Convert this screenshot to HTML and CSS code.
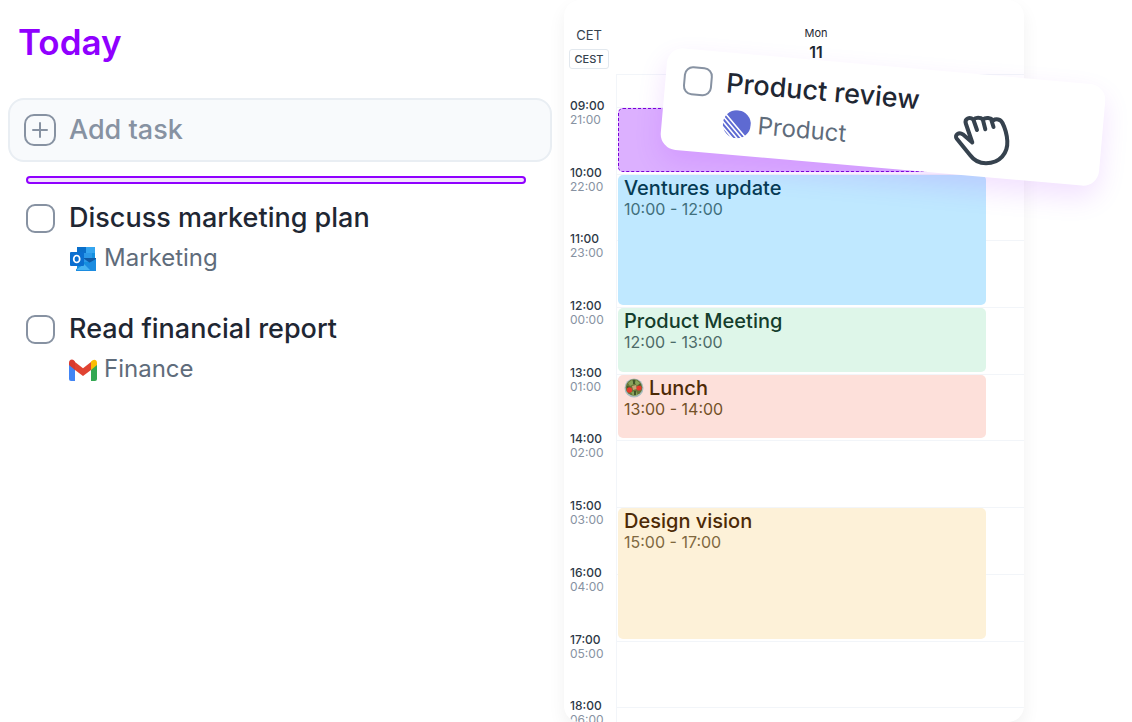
FILE: index.html
```html
<!DOCTYPE html>
<html lang="en">
<head>
    <meta charset="UTF-8">
    <meta name="viewport" content="width=device-width, initial-scale=1.0">
    <title>Today</title>
    <link rel="stylesheet" href="styles.css">
</head>
<body>
    <main class="planner">
        <section class="tasks">
            <h1>Today</h1>

            <label class="add-task">
                <svg class="add-icon" viewBox="0 0 32 32" fill="none" stroke="#8792a2" stroke-width="2" stroke-linecap="round">
                    <rect x="1" y="1" width="30" height="30" rx="9"/>
                    <path d="M16 9v14M9 16h14"/>
                </svg>
                <input type="text" placeholder="Add task" aria-label="Add task">
            </label>

            <div class="drop-line"></div>

            <ul class="task-list">
                <li class="task">
                    <input type="checkbox" id="task-marketing">
                    <label for="task-marketing">Discuss marketing plan</label>
                    <div class="source">
                        <svg class="source-icon" viewBox="0 0 28 28">
                            <path fill="#1490df" d="M8 3h18v23H8z"/>
                            <path fill="#0a6fca" d="M8 3h9v7H8z"/>
                            <path fill="#35a5ef" d="M17 3h9v6h-9z"/>
                            <path fill="#1683d8" d="M8 10h6v10H8z"/>
                            <path fill="#2a98e8" d="M14 9h9v9h-9z"/>
                            <path fill="#0f5aa6" d="M27 14v2l-6 3-7-5z"/>
                            <path fill="#1c8ce0" d="M27 15v12H7v-2l13-6z"/>
                            <path fill="#47b4f2" d="M7 26l8-6 6 6z"/>
                            <rect fill="#0a6fd0" x="1" y="8" width="14" height="14" rx="1"/>
                            <ellipse cx="7.700" cy="15" rx="3" ry="3.500" fill="none" stroke="#fff" stroke-width="1.700"/>
                        </svg>
                        <span>Marketing</span>
                    </div>
                </li>
                <li class="task">
                    <input type="checkbox" id="task-finance">
                    <label for="task-finance">Read financial report</label>
                    <div class="source">
                        <svg class="source-icon" viewBox="0 0 28 28">
                            <path fill="#4285f4" d="M0 9l6 4v13H2q-2 0-2-2z"/>
                            <path fill="#34a853" d="M22 13l6-4v15q0 2-2 2h-4z"/>
                            <path fill="#fbbc04" d="M22 6.500q3-3 5.200-1Q28 6 28 8v2l-6 5z"/>
                            <path fill="#e04332" d="M6 7l8 6.200L22 7v8l-8 6-8-6z"/>
                            <path fill="#d93a2f" d="M0 10V8q0-3.500 3-3.500 1.500 0 3 2V15z"/>
                        </svg>
                        <span>Finance</span>
                    </div>
                </li>
            </ul>
        </section>

        <section class="calendar">
            <header class="calendar-head">
                <div class="zones">
                    <span class="zone">CET</span>
                    <button type="button" class="zone-alt">CEST</button>
                </div>
                <div class="day">
                    <span class="day-name">Mon</span>
                    <span class="day-number">11</span>
                </div>
            </header>

            <div class="hours">
                <div class="slot first"></div>
                <div class="time h9">09:00<small>21:00</small></div><div class="slot h9"></div>
                <div class="time h10">10:00<small>22:00</small></div><div class="slot h10"></div>
                <div class="time h11">11:00<small>23:00</small></div><div class="slot h11"></div>
                <div class="time h12">12:00<small>00:00</small></div><div class="slot h12"></div>
                <div class="time h13">13:00<small>01:00</small></div><div class="slot h13"></div>
                <div class="time h14">14:00<small>02:00</small></div><div class="slot h14"></div>
                <div class="time h15">15:00<small>03:00</small></div><div class="slot h15"></div>
                <div class="time h16">16:00<small>04:00</small></div><div class="slot h16"></div>
                <div class="time h17">17:00<small>05:00</small></div><div class="slot h17"></div>
                <div class="time h18">18:00<small>06:00</small></div><div class="slot h18"></div>

                <div class="event placeholder h9"></div>
                <article class="event ventures h10">
                    <h2>Ventures update</h2>
                    <p>10:00 - 12:00</p>
                </article>
                <article class="event meeting h12">
                    <h2>Product Meeting</h2>
                    <p>12:00 - 13:00</p>
                </article>
                <article class="event lunch h13">
                    <h2>
                        <svg class="salad" viewBox="0 0 20 20">
                            <circle cx="10" cy="10" r="9.500" fill="#a9bcc0"/>
                            <circle cx="10" cy="9.500" r="8.300" fill="#667536"/>
                            <path fill="#87a35a" d="M4 5l4-3 2 4-4 2zM12 2l4 3-3 3-2-3zM7 14l5-1 2 4-5 1z"/>
                            <path fill="#c5a276" d="M8 8l4-1 1 4-4 1z"/>
                            <path fill="#41552a" d="M9 2h2v4H9zM3 8l4 1-1 1-3 0zM10 13h2v4h-2zM13 8l3-2 1 1-3 2z"/>
                            <circle cx="5.500" cy="12" r="2.700" fill="#e63b2c"/>
                            <circle cx="15" cy="10" r="2.600" fill="#e63b2c"/>
                        </svg>
                        Lunch
                    </h2>
                    <p>13:00 - 14:00</p>
                </article>
                <article class="event design h15">
                    <h2>Design vision</h2>
                    <p>15:00 - 17:00</p>
                </article>
            </div>
        </section>

        <!-- card being dragged onto the 9:00 slot -->
        <div class="task dragged">
            <input type="checkbox" id="task-review">
            <label for="task-review">Product review</label>
            <div class="source">
                <svg class="source-icon" viewBox="0 0 28 28">
                    <circle cx="14" cy="14" r="14" fill="#5e6ad2"/>
                    <path stroke="#fff" stroke-width="1.600" d="M1 3.500L25 27.500M-1 6.500L21 28.500M-1 11.500L17 29.500M-1 16.500L12 29.500"/>
                </svg>
                <span>Product</span>
            </div>
        </div>
        <svg class="hand" viewBox="0 0 60 56" fill="#fff" stroke="#36424e" stroke-width="4" stroke-linecap="round" stroke-linejoin="round">
            <path d="M20.300 30.500L10.800 22.300C7 19.500 2 23 4.800 26.800L18 43C22 48.500 28 51.300 34 51.300C48 51.300 56 41 55.300 29C55 24 52.500 15 50.500 11C48.500 7 44 6.500 41 8.500C39 5.500 33.500 5 31 7.500C28.500 5 23.500 5 21.500 7.500C17.500 4.500 12.500 6.500 13.800 11.500Z"/>
            <path d="M21.500 8L25 18M30.800 7.500L33.300 17.300M39.500 8.500L41.500 15"/>
        </svg>
    </main>
</body>
</html>
```
FILE: styles.css
```css
* {
    box-sizing: border-box;
}
body {
    margin: 0;
    font-family: Inter, "Liberation Sans", sans-serif;
    color: #1f2733;
    background-color: #fff;
}
h1, h2, p, ul {
    margin: 0;
    padding: 0;
}
.planner {
    position: relative;
    display: grid;
    grid-template-columns: 560fr 460fr;
    gap: 4px;
    height: 100vh;
    padding-right: 108px;
    overflow: hidden;
}

/* Task list */
.tasks {
    padding: 20px 8px;
    border-radius: 16px;
}
h1 {
    padding-left: 10px;
    font-size: 35px;
    line-height: 44px;
    font-weight: 600;
    color: #9000ff;
}
.add-task {
    display: flex;
    align-items: center;
    gap: 13px;
    height: 64px;
    margin-top: 34px;
    padding: 0 14px;
    border: 2px solid #e9eef3;
    border-radius: 16px;
    background-color: #f8fafc;
}
.add-icon {
    flex: none;
    width: 32px;
    height: 32px;
}
.add-task input {
    flex: 1;
    min-width: 0;
    padding: 0;
    border: 0;
    outline: 0;
    background: none;
    font: 500 27px/36px Inter, "Liberation Sans", sans-serif;
}
.add-task input::placeholder {
    color: #8792a2;
    opacity: 1;
}
.drop-line {
    height: 8px;
    margin: 14px 26px 14px 18px;
    border: 2px solid #9000ff;
    border-radius: 4px;
    background-color: #f3e2ff;
}
.task-list {
    display: grid;
    gap: 35px;
    padding: 0 18px;
    list-style: none;
}
.task {
    display: grid;
    grid-template-columns: 29px 1fr;
    column-gap: 14px;
    row-gap: 4px;
    align-items: center;
}
.task input {
    appearance: none;
    width: 29px;
    height: 29px;
    margin: 0;
    border: 2px solid #8792a2;
    border-radius: 9px;
}
.task input:checked {
    background-color: #9000ff;
}
.task label {
    font-size: 27px;
    line-height: 40px;
    font-weight: 500;
    white-space: nowrap;
}
.source {
    grid-column: 2;
    display: flex;
    align-items: center;
    gap: 7px;
    font-size: 24px;
    line-height: 32px;
    color: #5f6c7b;
}
.source-icon {
    width: 28px;
    height: 28px;
}

/* Calendar */
.calendar {
    overflow: hidden;
    display: flex;
    flex-direction: column;
    border-radius: 16px;
    background-color: #fff;
    box-shadow: 0 8px 18px rgba(0, 0, 0, 0.06);
}
.calendar-head {
    flex: none;
    display: grid;
    grid-template-columns: 52px 1fr;
    height: 74px;
    padding-top: 25px;
}
.zones, .day {
    display: flex;
    flex-direction: column;
    align-items: center;
}
.zones {
    padding-right: 2px;
}
.zone {
    font-size: 13px;
    line-height: 20px;
    color: #36424e;
}
.zone-alt {
    width: 40px;
    height: 20px;
    margin-top: 4px;
    padding: 0;
    border: 1px solid #e2e8ee;
    border-radius: 3px;
    background: none;
    font: 500 11px/16px Inter, "Liberation Sans", sans-serif;
    color: #36424e;
}
.day {
    padding-right: 8px;
}
.day-name {
    font-size: 11px;
    line-height: 16px;
}
.day-number {
    font-size: 16px;
    line-height: 22px;
    font-weight: 600;
}
.hours {
    flex: none;
    display: grid;
    grid-template-columns: 52px 1fr;
    grid-template-rows: 33px repeat(10, 1fr);
    height: 700px;
}
.h9 { grid-row: 2; }
.h10 { grid-row: 3; }
.h11 { grid-row: 4; }
.h12 { grid-row: 5; }
.h13 { grid-row: 6; }
.h14 { grid-row: 7; }
.h15 { grid-row: 8; }
.h16 { grid-row: 9; }
.h17 { grid-row: 10; }
.h18 { grid-row: 11; }
.time {
    grid-column: 1;
    margin-top: -8px;
    padding-left: 6px;
    font-size: 12px;
    line-height: 14px;
    font-weight: 500;
    color: #2c3846;
}
.time small {
    display: block;
    font-size: 12px;
    line-height: 13px;
    font-weight: 400;
    color: #8792a2;
}
.slot {
    grid-column: 2;
    border-top: 1px solid #f2f5f9;
    border-left: 1px solid #f2f5f9;
}
.first {
    grid-row: 1;
}
.event {
    grid-column: 2;
    margin: 1px 38px 2px 2px;
    padding: 2px 6px;
    border-radius: 5px;
}
.event h2 {
    display: flex;
    align-items: center;
    gap: 5px;
    font-size: 20px;
    line-height: 22px;
    font-weight: 500;
}
.event p {
    font-size: 16px;
    line-height: 20px;
}
.placeholder {
    border: 1px dashed #7a00d8;
    background-color: #dcb0ff;
}
.ventures {
    grid-row-end: span 2;
    color: #063b54;
    background-color: #bfe8ff;
}
.ventures p {
    color: #416f7c;
}
.meeting {
    color: #143d2c;
    background-color: #def6e9;
}
.meeting p {
    color: #4d6b68;
}
.lunch {
    color: #4d2a06;
    background-color: #fde0da;
}
.lunch p {
    color: #745228;
}
.design {
    grid-row-end: span 2;
    color: #4d2a06;
    background-color: #fdf1d8;
}
.design p {
    color: #80683f;
}
.salad {
    width: 20px;
    height: 20px;
}

/* Dragged card */
.dragged {
    position: absolute;
    top: 66px;
    right: 29px;
    width: 440px;
    height: 102px;
    padding: 11px 18px;
    align-content: start;
    border-radius: 16px;
    background-color: #fff;
    box-shadow: 0 12px 28px rgba(144, 0, 255, 0.12);
    transform: rotate(5deg);
}
.hand {
    position: absolute;
    top: 112px;
    right: 120px;
    width: 60px;
    height: 56px;
}
```
